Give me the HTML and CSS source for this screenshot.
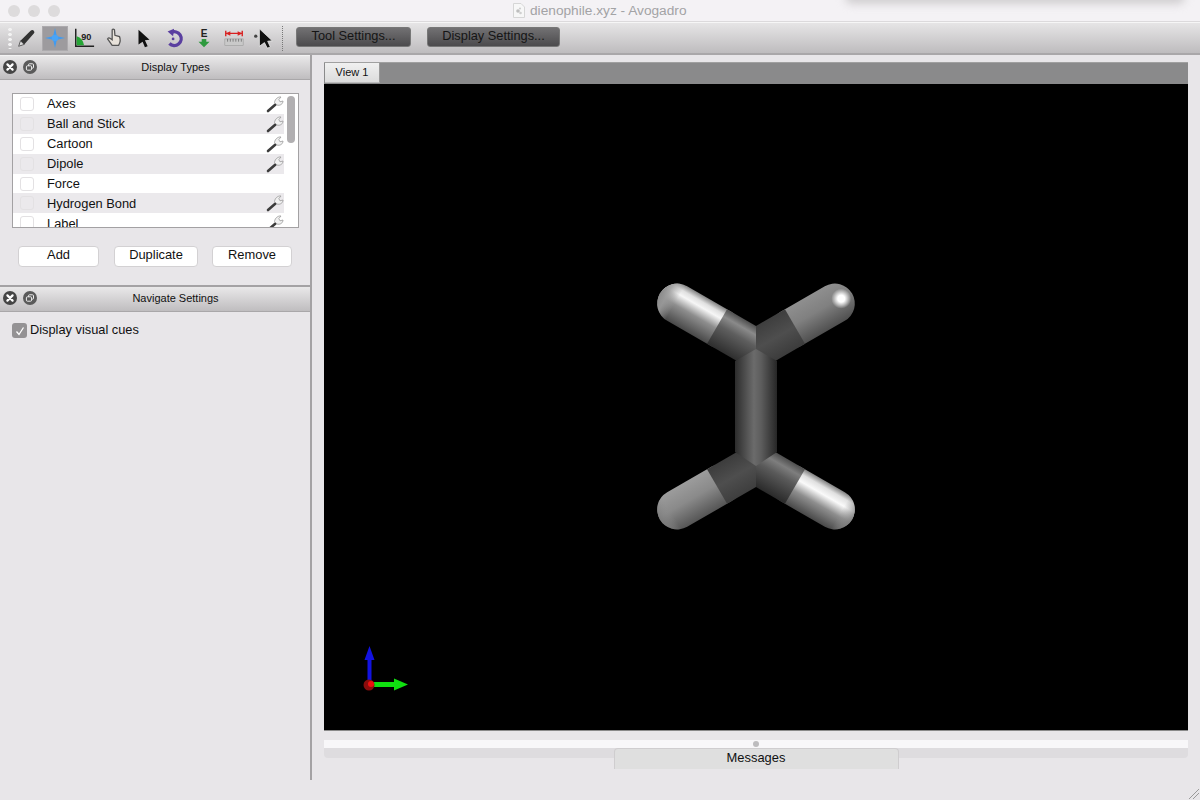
FILE: index.html
```html
<!DOCTYPE html>
<html lang="en">
<head>
<meta charset="utf-8">
<title>dienophile.xyz - Avogadro</title>
<link rel="stylesheet" href="styles.css">
</head>
<body>
<svg class="defs" width="0" height="0" aria-hidden="true">
  <defs>
    <symbol id="wrench" viewBox="0 0 18 18">
      <path d="M2 16 L9.500 9.500" stroke="#3c3c3c" stroke-width="2.600" stroke-linecap="round" fill="none"/>
      <path d="M8.500 7.500 C9 4 12 1.500 15 2 L12.800 4.600 L14 6.800 L17 6 C17 9 14 11 11 10 Z" fill="#f1f1f1" stroke="#9a9a9a" stroke-width=".8"/>
    </symbol>
    <symbol id="close" viewBox="0 0 14 14">
      <circle cx="7" cy="7" r="7" fill="#454545"/>
      <path d="M4.400 4.400 L9.600 9.600 M9.600 4.400 L4.400 9.600" stroke="#fff" stroke-width="2.200" stroke-linecap="round"/>
    </symbol>
    <symbol id="float" viewBox="0 0 14 14">
      <circle cx="7" cy="7" r="7" fill="#5a5a5a"/>
      <rect x="5.500" y="3.800" width="5" height="4.400" rx="1" fill="none" stroke="#eee" stroke-width="1"/>
      <rect x="3.400" y="5.800" width="5.200" height="4.400" rx="1" fill="#5a5a5a" stroke="#eee" stroke-width="1"/>
    </symbol>
  </defs>
</svg>
<div class="window">
  <header class="titlebar">
    <div class="lights"><span class="light"></span><span class="light"></span><span class="light"></span></div>
    <div class="title">
      <svg class="doc" viewBox="0 0 12 15" width="12" height="15"><path d="M.5.5 H8 L11.500 4 V14.500 H.5 Z" fill="#f7f7f7" stroke="#d6d6d6"/><circle cx="5" cy="8" r="1.800" fill="#bdbdbd"/><circle cx="7.500" cy="10" r="1.300" fill="#cfcfcf"/><circle cx="7" cy="5.500" r="1.100" fill="#cfcfcf"/></svg>
      <span>dienophile.xyz - Avogadro</span>
    </div>
    <div class="shadow"></div>
  </header>

  <div class="toolbar">
    <div class="grip"></div>
    <span class="tool first">
      <svg viewBox="0 0 24 24" width="24" height="24"><path d="M4 21 L6 15 L17 4 Q19 2.500 20.500 4 Q22 5.500 20.500 7 L10 19 Z" fill="#333"/><path d="M4 21 L6 15 L10 19 Z" fill="#ddd" stroke="#444" stroke-width=".8"/></svg>
    </span>
    <span class="tool active">
      <svg viewBox="0 0 24 24" width="24" height="24"><path d="M12 1 L14 10 L23 12 L14 14 L12 23 L10 14 L1 12 L10 10 Z" fill="#3f9bf2"/><circle cx="12" cy="12" r="3.600" fill="#4aa4f6"/></svg>
    </span>
    <span class="tool">
      <svg viewBox="0 0 24 24" width="24" height="24"><path d="M3 2 V21 H23" fill="none" stroke="#222" stroke-width="1.600"/><path d="M4 20 V10 Q11 12 12 20 Z" fill="#25a535"/><text x="9" y="14" class="tool-num">90</text></svg>
    </span>
    <span class="tool">
      <svg viewBox="0 0 24 24" width="24" height="24"><path d="M10 3 Q11 1.500 12.500 3 L13 9 L18 10.500 Q20 15 17 20 H10 L5 13 Q6 11 8 12.500 L10 14 Z" fill="#e8e2da" stroke="#555" stroke-width="1.400"/></svg>
    </span>
    <span class="tool">
      <svg viewBox="0 0 24 24" width="24" height="24"><path d="M6 3 L18 14 L13 14.500 L16 21 L13 22 L10.500 16 L6 19 Z" fill="#111"/></svg>
    </span>
    <span class="tool">
      <svg viewBox="0 0 24 24" width="24" height="24"><path d="M9 6 A7.500 7.500 0 1 1 7 18" fill="none" stroke="#5a3fa0" stroke-width="3.600"/><path d="M5 5 L12 2 L11 10 Z" fill="#5a3fa0"/><circle cx="11" cy="13" r="1.500" fill="#5a3fa0"/></svg>
    </span>
    <span class="tool">
      <svg viewBox="0 0 24 24" width="24" height="24"><text x="12" y="11" class="tool-e">E</text><path d="M9.500 13 H14.500 V16 H18 L12 22 L6 16 H9.500 Z" fill="#2f9a3f"/></svg>
    </span>
    <span class="tool">
      <svg viewBox="0 0 24 24" width="24" height="24"><path d="M3 4 V10 M21 4 V10 M3 7 H21" stroke="#d82020" stroke-width="1.500" fill="none"/><path d="M3 7 L8 4.500 V9.500 Z M21 7 L16 4.500 V9.500 Z" fill="#d82020"/><rect x="2" y="13" width="20" height="7" fill="#c9c9c9" stroke="#999" stroke-width=".6"/><path d="M5 13 V16 M8 13 V16 M11 13 V16 M14 13 V16 M17 13 V16 M20 13 V16" stroke="#666" stroke-width=".8"/></svg>
    </span>
    <span class="tool last">
      <svg viewBox="0 0 24 24" width="24" height="24"><circle cx="3" cy="10" r="1.800" fill="#444"/><path d="M7 2 L21 15 L16 15.500 L19 22 L15.500 23 L12.500 17 L7 21 Z" fill="#111" stroke="#eee" stroke-width=".8"/></svg>
    </span>
    <div class="sep"></div>
    <button class="dark-btn tool-settings">Tool Settings...</button>
    <button class="dark-btn display-settings">Display Settings...</button>
  </div>

  <div class="main">
    <aside class="sidebar">
      <section class="panel-display">
        <div class="dock-title">
          <svg class="dock-btn" width="14" height="14"><use href="#close"/></svg>
          <svg class="dock-btn" width="14" height="14"><use href="#float"/></svg>
          <span class="dock-label">Display Types</span>
        </div>
        <div class="listbox">
          <div class="rows">
            <div class="row"><span class="check"></span><span class="name">Axes</span><svg class="wrench" width="18" height="18"><use href="#wrench"/></svg></div>
            <div class="row alt"><span class="check"></span><span class="name">Ball and Stick</span><svg class="wrench" width="18" height="18"><use href="#wrench"/></svg></div>
            <div class="row"><span class="check"></span><span class="name">Cartoon</span><svg class="wrench" width="18" height="18"><use href="#wrench"/></svg></div>
            <div class="row alt"><span class="check"></span><span class="name">Dipole</span><svg class="wrench" width="18" height="18"><use href="#wrench"/></svg></div>
            <div class="row"><span class="check"></span><span class="name">Force</span></div>
            <div class="row alt"><span class="check"></span><span class="name">Hydrogen Bond</span><svg class="wrench" width="18" height="18"><use href="#wrench"/></svg></div>
            <div class="row"><span class="check"></span><span class="name">Label</span><svg class="wrench" width="18" height="18"><use href="#wrench"/></svg></div>
          </div>
          <div class="scroll"><div class="thumb"></div></div>
        </div>
        <div class="actions">
          <button class="btn btn-add">Add</button>
          <button class="btn btn-dup">Duplicate</button>
          <button class="btn btn-rem">Remove</button>
        </div>
      </section>
      <section class="panel-nav">
        <div class="dock-title">
          <svg class="dock-btn" width="14" height="14"><use href="#close"/></svg>
          <svg class="dock-btn" width="14" height="14"><use href="#float"/></svg>
          <span class="dock-label">Navigate Settings</span>
        </div>
        <label class="cue">
          <span class="checked"><svg viewBox="0 0 14 14" width="14" height="14"><path d="M3.500 7.500 L6 10.500 L10.500 3.500" fill="none" stroke="#fff" stroke-width="1.300"/></svg></span>
          <span>Display visual cues</span>
        </label>
      </section>
    </aside>

    <main class="content">
      <div class="tabbar"><div class="tab">View 1</div></div>
      <div class="viewport">
        <svg class="scene" width="864" height="647" viewBox="324 84 864 647">
          <defs>
            <clipPath id="left-half"><rect x="600" y="250" width="156" height="300"/></clipPath>
            <clipPath id="right-half"><rect x="756" y="250" width="156" height="300"/></clipPath>
            <linearGradient id="bond" x1="0" x2="1" y1="0" y2="0">
              <stop offset="0" stop-color="#2c2c2c"/><stop offset=".45" stop-color="#6b6b6b"/><stop offset=".62" stop-color="#5d5d5d"/><stop offset="1" stop-color="#262626"/>
            </linearGradient>
            <linearGradient id="dark-hi-low" x1="0" x2="0" y1="0" y2="1">
              <stop offset="0" stop-color="#2e2e2e"/><stop offset=".55" stop-color="#5e5e5e"/><stop offset=".8" stop-color="#8a8a8a"/><stop offset="1" stop-color="#4e4e4e"/>
            </linearGradient>
            <linearGradient id="dark-hi-up" x1="0" x2="0" y1="0" y2="1">
              <stop offset="0" stop-color="#4e4e4e"/><stop offset=".2" stop-color="#7e7e7e"/><stop offset=".45" stop-color="#5a5a5a"/><stop offset="1" stop-color="#2a2a2a"/>
            </linearGradient>
            <linearGradient id="dark-flat" x1="0" x2="0" y1="0" y2="1">
              <stop offset="0" stop-color="#3e3e3e"/><stop offset=".5" stop-color="#4e4e4e"/><stop offset="1" stop-color="#3c3c3c"/>
            </linearGradient>
            <linearGradient id="light-hi-low" x1="0" x2="0" y1="0" y2="1">
              <stop offset="0" stop-color="#484848"/><stop offset=".45" stop-color="#8e8e8e"/><stop offset=".72" stop-color="#f6f6f6"/><stop offset=".85" stop-color="#e0e0e0"/><stop offset="1" stop-color="#808080"/>
            </linearGradient>
            <linearGradient id="light-hi-up" x1="0" x2="0" y1="0" y2="1">
              <stop offset="0" stop-color="#808080"/><stop offset=".15" stop-color="#e0e0e0"/><stop offset=".32" stop-color="#fafafa"/><stop offset=".6" stop-color="#8e8e8e"/><stop offset="1" stop-color="#484848"/>
            </linearGradient>
            <linearGradient id="light-flat-tr" x1="0" x2="0" y1="0" y2="1">
              <stop offset="0" stop-color="#8f8f8f"/><stop offset=".45" stop-color="#808080"/><stop offset="1" stop-color="#4f4f4f"/>
            </linearGradient>
            <linearGradient id="light-flat-bl" x1="0" x2="0" y1="0" y2="1">
              <stop offset="0" stop-color="#555"/><stop offset=".55" stop-color="#8a8a8a"/><stop offset="1" stop-color="#9c9c9c"/>
            </linearGradient>
            <linearGradient id="tip-fade" x1="0" x2="1" y1="0" y2="0">
              <stop offset=".8" stop-color="#a0a0a0" stop-opacity="0"/><stop offset=".92" stop-color="#9c9c9c" stop-opacity=".85"/><stop offset="1" stop-color="#8a8a8a"/>
            </linearGradient>
            <linearGradient id="tip-dim" x1="0" x2="1" y1="0" y2="0">
              <stop offset=".85" stop-color="#909090" stop-opacity="0"/><stop offset="1" stop-color="#7a7a7a" stop-opacity=".8"/>
            </linearGradient>
            <radialGradient id="spot">
              <stop offset="0" stop-color="#fff"/><stop offset=".35" stop-color="#fff"/><stop offset="1" stop-color="#fff" stop-opacity="0"/>
            </radialGradient>
          </defs>
          <g transform="translate(756 349) rotate(210)">
            <rect x="20" y="-20" width="91" height="40" rx="20" fill="url(#light-hi-low)"/>
            <rect x="20" y="-20" width="91" height="40" rx="20" fill="url(#tip-fade)"/>
          </g>
          <g clip-path="url(#left-half)">
            <g transform="translate(756 349) rotate(210)">
              <rect x="-30" y="-20" width="75" height="40" fill="url(#dark-hi-low)"/>
            </g>
          </g>
          <g transform="translate(756 349) rotate(-30)">
            <rect x="20" y="-20" width="91" height="40" rx="20" fill="url(#light-flat-tr)"/>
            <circle cx="99" cy="-1" r="10" fill="url(#spot)"/>
          </g>
          <g clip-path="url(#right-half)">
            <g transform="translate(756 349) rotate(-30)">
              <rect x="-30" y="-20" width="75" height="40" fill="url(#dark-flat)"/>
            </g>
          </g>
          <g transform="translate(756 464) rotate(150)">
            <rect x="20" y="-20" width="91" height="40" rx="20" fill="url(#light-flat-bl)"/>
            <rect x="20" y="-20" width="91" height="40" rx="20" fill="url(#tip-dim)"/>
          </g>
          <g clip-path="url(#left-half)">
            <g transform="translate(756 464) rotate(150)">
              <rect x="-30" y="-20" width="75" height="40" fill="url(#dark-flat)"/>
            </g>
          </g>
          <g transform="translate(756 464) rotate(30)">
            <rect x="20" y="-20" width="91" height="40" rx="20" fill="url(#light-hi-up)"/>
            <rect x="20" y="-20" width="91" height="40" rx="20" fill="url(#tip-dim)"/>
          </g>
          <g clip-path="url(#right-half)">
            <g transform="translate(756 464) rotate(30)">
              <rect x="-30" y="-20" width="75" height="40" fill="url(#dark-hi-up)"/>
            </g>
          </g>
          <path d="M735 361 L756 349 L777 361 V452 L756 466 L735 452 Z" fill="url(#bond)"/>
          <path d="M367.500 684 V660 H364.500 L369.500 646 L374.500 660 H371.500 V684 Z" fill="#1212e0"/>
          <path d="M370 682 H394 V678.500 L408 684.500 L394 690.500 V687 H370 Z" fill="#10e010"/>
          <circle cx="369" cy="685" r="5.500" fill="#8a0c0c"/>
          <circle cx="371" cy="684" r="3" fill="#ee1010"/>
        </svg>
      </div>
      <div class="handle"><span class="dot"></span></div>
      <div class="msgbar"><div class="msgtab">Messages</div></div>
    </main>
  </div>
  <svg class="grip-corner" viewBox="0 0 12 12" width="12" height="12"><path d="M11 1 L1 11 M11 5 L5 11" stroke="#9a9a9a" stroke-width="1" fill="none"/></svg>
</div>
</body>
</html>
```
FILE: styles.css
```css
* { box-sizing: border-box; }
html, body { margin: 0; height: 100%; }
body { font-family: "Liberation Sans", Arial, sans-serif; color: #111; background: #e8e6e9; overflow: hidden; }
.defs { position: absolute; }
.window { position: relative; width: 1200px; height: 800px; display: flex; flex-direction: column; background: #e8e6e9; overflow: hidden; }

.titlebar { position: relative; height: 22px; flex: none; background: #f4f2f5; border-bottom: 1px solid #dcdadc; overflow: hidden; }
.lights { display: flex; gap: 8px; padding: 5px 0 0 8px; }
.light { width: 12px; height: 12px; border-radius: 50%; background: #dddbdc; }
.title { position: absolute; top: 3px; left: 513px; display: flex; align-items: center; gap: 5px; font-size: 13.700px; line-height: 15px; color: #a3a3a5; }
.shadow { position: absolute; top: -10px; left: 845px; width: 340px; height: 14px; background: #d0ced0; filter: blur(4px); border-radius: 8px; }

.toolbar { height: 33px; flex: none; display: flex; align-items: center; background: linear-gradient(#e6e5e6, #bebcbe); border-bottom: 2px solid #a9a7a9; border-top: 1px solid #f6f6f6; padding-left: 7px; }
.grip { width: 6px; height: 22px; flex: none; background: radial-gradient(circle, #f2f2f2 1.500px, transparent 2px) 0 0 / 6px 5px; }
.tool { width: 30px; height: 24px; display: flex; align-items: center; justify-content: center; flex: none; }
.tool svg { width: 22px; height: 22px; }
.tool.first { width: 26px; }
.tool.active { width: 26px; height: 25px; margin: 0 1px 0 3px; background: #9d9b9e; border: 1px solid #acaaad; }
.tool-num { font: 700 10px "Liberation Sans", sans-serif; fill: #222; }
.tool-e { font: 700 11px "Liberation Sans", sans-serif; fill: #222; text-anchor: middle; }
.tool.last { margin-right: 3px; }
.sep { width: 0; height: 25px; flex: none; border-left: 1px dotted #777; margin-right: 13px; }
.dark-btn { height: 20px; padding: 0 0 4px; margin-bottom: 2px; flex: none; border: 1px solid #777; border-radius: 3px; background: linear-gradient(#727173, #4c4b4d); font: 12.800px/16px "Liberation Sans", sans-serif; color: #151515; }
.tool-settings { width: 115px; margin-right: 16px; }
.display-settings { width: 133px; }

.main { flex: 1; display: flex; min-height: 0; }
.sidebar { width: 312px; height: 725px; flex: none; border-right: 2px solid #a4a2a4; }
.panel-display { height: 230px; display: flex; flex-direction: column; }
.dock-title { height: 25px; flex: none; display: flex; align-items: center; gap: 6px; padding: 0 0 1px 3px; background: linear-gradient(#e9e8e9, #bfbdbf); border-top: 1px solid #f3f3f3; border-bottom: 1px solid #a9a7a9; }
.dock-btn { flex: none; }
.dock-label { flex: 1; text-align: center; font-size: 11px; color: #111; padding-right: 2px; }
.listbox { display: flex; flex: none; width: 287px; height: 135px; margin: 13px 0 0 12px; border: 1px solid #a3a1a3; background: #fff; overflow: hidden; }
.rows { width: 271px; flex: none; }
.row { height: 19.900px; display: flex; align-items: center; padding-left: 7px; font-size: 12.850px; background: #fff; }
.row.alt { background: #ebe9ec; }
.check { width: 14px; height: 14px; flex: none; border: 1px solid #e3e1e3; border-radius: 3px; background: inherit; margin-right: 13px; }
.name { flex: 1; }
.wrench { flex: none; }
.scroll { flex: 1; padding: 2px 3px 0 3px; }
.thumb { width: 8px; height: 47px; border-radius: 4px; background: #b1afb1; }
.actions { display: flex; margin: 18px 0 0 18px; }
.btn { height: 21px; background: #fff; border: 1px solid #d3d1d3; border-radius: 4px; font: 12.900px/16px "Liberation Sans", sans-serif; color: #111; padding: 0 0 3px; }
.btn-add { width: 81px; margin-right: 15px; }
.btn-dup { width: 84px; margin-right: 14px; }
.btn-rem { width: 80px; }

.panel-nav { flex: 1; }
.panel-nav .dock-title { height: 27px; padding-bottom: 2px; border-top: 2px solid #a4a2a4; }
.cue { display: flex; align-items: center; gap: 3px; margin: 10px 0 0 12px; font-size: 12.800px; line-height: 16px; }
.checked { width: 15px; height: 15px; display: flex; align-items: center; justify-content: center; border-radius: 3px; background: #949294; margin-top: 1px; }

.content { flex: 1; min-width: 0; padding: 7px 12px 0 12px; }
.tabbar { height: 22px; background: #8a8a8b; border-top: 1px solid #a0a0a0; padding-left: 1px; }
.tab { width: 55px; height: 20px; background: linear-gradient(#f0f0f0, #dcdcdc); border-right: 1px solid #9a9a9a; border-bottom: 1px solid #bbb; font-size: 11px; line-height: 19px; text-align: center; color: #111; }
.viewport { height: 647px; background: #000; border-bottom: 1px solid #8a8a8a; }
.scene { display: block; }
.handle { height: 8px; margin-top: 9px; background: #f8f7f9; display: flex; align-items: center; justify-content: center; }
.dot { width: 6px; height: 6px; border-radius: 50%; background: #bdbcbe; }
.msgbar { height: 10px; background: #dedcdf; border-radius: 0 0 4px 4px; display: flex; justify-content: center; }
.msgtab { width: 285px; height: 21px; flex: none; background: #dfdfdf; border: 1px solid #cfcdcf; border-bottom: none; border-radius: 4px 4px 0 0; font-size: 12.900px; line-height: 18px; text-align: center; color: #111; }
.grip-corner { position: absolute; right: 0; bottom: 0; }
```
